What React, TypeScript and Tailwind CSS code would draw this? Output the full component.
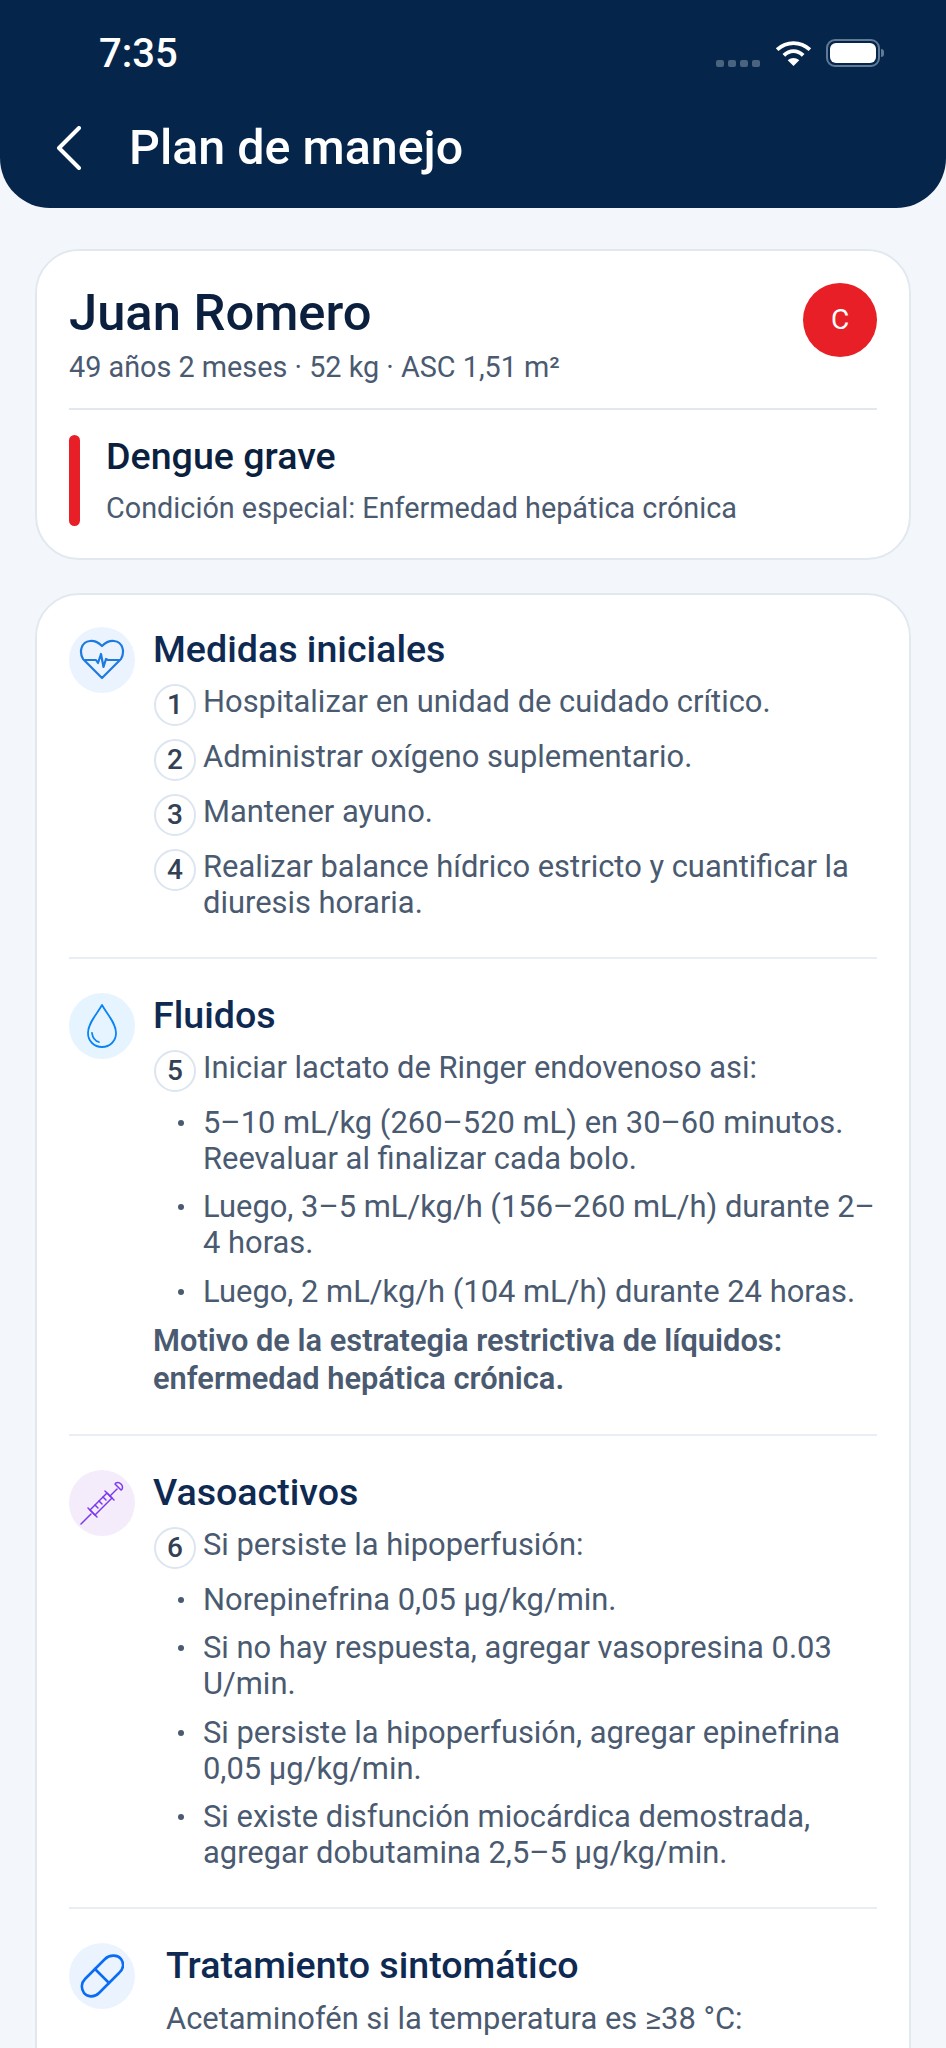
const font = { fontFamily: "Roboto, sans-serif" };

function NumberBadge({ n }: { n: number }) {
  return (
    <span className="flex h-[42px] w-[42px] shrink-0 items-center justify-center rounded-full border-2 border-[#dce5f0] text-[28px] font-medium leading-none text-[#334155]">
      {n}
    </span>
  );
}

function Step({ n, children }: { n: number; children: React.ReactNode }) {
  return (
    <div className="flex items-start gap-[7px]">
      <NumberBadge n={n} />
      <p className="text-[30.9px] leading-[36px] text-[#4a5a70]">{children}</p>
    </div>
  );
}

function Bullet({ children }: { children: React.ReactNode }) {
  return (
    <div className="flex items-start">
      <span className="flex h-[36px] w-[49px] shrink-0 items-center justify-end pr-[19px]">
        <span className="h-[6px] w-[6px] rounded-full bg-[#4a5a70]" />
      </span>
      <p className="text-[30.9px] leading-[36px] text-[#4a5a70]">{children}</p>
    </div>
  );
}

function IconCircle({ bg, children }: { bg: string; children: React.ReactNode }) {
  return (
    <div className={`flex h-[66px] w-[66px] shrink-0 items-center justify-center rounded-full ${bg}`}>
      {children}
    </div>
  );
}

function HeartIcon() {
  return (
    <svg width="46" height="42" viewBox="0 0 46 42" fill="none" stroke="#1d7ae0" strokeWidth="2.2" strokeLinecap="round" strokeLinejoin="round">
      <path d="M4 20 C0 13 2 3 11 2 C16 1.5 20 4 23 7 C26 4 30 1.5 35 2 C44 3 46 13 42 20" />
      <path d="M5 21 H17 L19 24 L22 15 L24.5 28 L27 20 L29 21 H41 L23 39 Z" />
    </svg>
  );
}

function DropIcon() {
  return (
    <svg width="32" height="46" viewBox="0 0 32 46" fill="none" stroke="#0a84f5" strokeWidth="1.8" strokeLinecap="round" strokeLinejoin="round">
      <path d="M16 2 C11 11 2 20 2 30 C2 38 8 44 16 44 C24 44 30 38 30 30 C30 20 21 11 16 2 Z" />
      <path d="M6 30 C6.5 34 9 38 13 39" />
    </svg>
  );
}

function SyringeIcon() {
  return (
    <svg width="44" height="44" viewBox="0 0 44 44" fill="none" stroke="#7c3aed" strokeWidth="1.5" strokeLinecap="round" strokeLinejoin="round">
      <path d="M1 43 L11 33" />
      <path d="M10 29 L15 34 L32 17 L27 12 L10 29 Z" />
      <path d="M8 27 L17 36" />
      <path d="M25 10 L34 19" />
      <path d="M30 15 L37 8" />
      <path d="M35 3 L41 9 C43 8 43 5 41 3 C39 1 36 1 35 3 Z" />
      <path d="M15 24 L18 27 M19 20 L22 23 M23 16 L26 19" />
    </svg>
  );
}

function PillIcon() {
  return (
    <svg width="44" height="44" viewBox="0 0 44 44" fill="none" stroke="#0a6cf5" strokeWidth="2.6" strokeLinecap="round" strokeLinejoin="round">
      <path d="M5 25 L25 5 C30 0 38 1 41 5 C44 9 44 15 39 19 L19 39 C14 44 7 43 4 39 C1 35 1 29 5 25 Z" />
      <path d="M15 15 L29 29" />
    </svg>
  );
}

function Section({
  icon,
  title,
  top,
  gap,
  children,
}: {
  icon: React.ReactNode;
  title: string;
  top: string;
  gap: string;
  children: React.ReactNode;
}) {
  return (
    <section className={`flex gap-[19px] border-b-2 border-[#e9eef5] pb-[36px] ${top}`}>
      {icon}
      <div className="min-w-0 flex-1 pt-[4px]">
        <h2 className="-ml-px text-[37.6px] font-medium leading-[36px] text-[#0f2a52]">{title}</h2>
        <div className={`mt-[17px] flex flex-col ${gap}`}>{children}</div>
      </div>
    </section>
  );
}

export default function App() {
  return (
    <div className="h-[2048px] w-[946px] overflow-hidden bg-[#f3f6fb]" style={font}>
      <header className="h-[208px] rounded-b-[50px] bg-[#05264a] text-white">
        <div className="flex h-[104px] items-start justify-between pl-[99px] pr-[66px] pt-[32px]">
          <span className="text-[40px] font-medium leading-[44px]">7:35</span>
          <div className="flex items-end pt-[7px]">
            <div className="mr-[15px] flex gap-[4px]">
              <span className="h-[7px] w-[8px] rounded-[2px] bg-[#4a6480]" />
              <span className="h-[7px] w-[8px] rounded-[2px] bg-[#4a6480]" />
              <span className="h-[7px] w-[8px] rounded-[2px] bg-[#4a6480]" />
              <span className="h-[7px] w-[8px] rounded-[2px] bg-[#4a6480]" />
            </div>
            <svg width="37" height="27" viewBox="0 0 38 28" fill="none" stroke="white" strokeWidth="4">
              <path d="M2 10 C12 1 26 1 36 10" />
              <path d="M9 16 C15 10 23 10 29 16" />
              <path d="M13 21 L19 27 L25 21 C21 18 17 18 13 21 Z" fill="white" stroke="none" />
            </svg>
            <div className="relative ml-[14px] flex h-[28px] w-[54px] items-center justify-center rounded-[9px] border-2 border-[#5f7a96]">
              <span className="h-[20px] w-[46px] rounded-[6px] bg-white" />
              <span className="absolute -right-[6px] h-[8px] w-[3px] rounded-r-full bg-[#5f7a96]" />
            </div>
          </div>
        </div>
        <div className="flex items-center pl-[56px] pt-[18px]">
          <svg width="26" height="44" viewBox="0 0 26 44" fill="none" stroke="white" strokeWidth="4" strokeLinecap="round" strokeLinejoin="round">
            <path d="M23 2 L3 22 L23 42" />
          </svg>
          <h1 className="ml-[47px] text-[48.4px] font-medium leading-[52px]">Plan de manejo</h1>
        </div>
      </header>

      <main className="flex flex-col gap-[33px] px-[35px] pt-[41px]">
        <div className="rounded-[44px] border-2 border-[#e2e8f0] bg-white px-[32px] pt-[34px] pb-[32px]">
          <div className="flex items-start justify-between border-b-2 border-[#e2e8f0] pb-[24px]">
            <div>
              <h2 className="text-[50.7px] font-medium leading-[56px] text-[#0b1f3f]">Juan Romero</h2>
              <p className="mt-[9px] text-[28.8px] leading-[34px] text-[#4a5a70]">49 años 2 meses · 52 kg · ASC 1,51 m²</p>
            </div>
            <span className="-mt-[2px] flex h-[74px] w-[74px] items-center justify-center rounded-full bg-[#e81f27] text-[28px] text-white">C</span>
          </div>
          <div className="mt-[25px] flex gap-[26px]">
            <div className="w-[11px] rounded-full bg-[#e81f27]" />
            <div className="-mt-[1px]">
              <h3 className="text-[37.6px] font-medium leading-[44px] text-[#0b1f3f]">Dengue grave</h3>
              <p className="mt-[12px] text-[28.8px] leading-[36px] text-[#4a5a70]">Condición especial: Enfermedad hepática crónica</p>
            </div>
          </div>
        </div>

        <div className="rounded-[44px] border-2 border-[#e2e8f0] bg-white px-[32px]">
          <Section icon={<IconCircle bg="bg-[#ebf4fe]"><HeartIcon /></IconCircle>} title="Medidas iniciales" top="pt-[32px]" gap="gap-[13px]">
            <Step n={1}>Hospitalizar en unidad de cuidado crítico.</Step>
            <Step n={2}>Administrar oxígeno suplementario.</Step>
            <Step n={3}>Mantener ayuno.</Step>
            <Step n={4}>Realizar balance hídrico estricto y cuantificar la diuresis horaria.</Step>
          </Section>
          <Section icon={<IconCircle bg="bg-[#e6f4ff]"><DropIcon /></IconCircle>} title="Fluidos" top="pt-[34px]" gap="gap-[12.5px]">
            <Step n={5}>Iniciar lactato de Ringer endovenoso asi:</Step>
            <Bullet>5–10 mL/kg (260–520 mL) en 30–60 minutos. Reevaluar al finalizar cada bolo.</Bullet>
            <Bullet>Luego, 3–5 mL/kg/h (156–260 mL/h) durante 2–4 horas.</Bullet>
            <Bullet>Luego, 2 mL/kg/h (104 mL/h) durante 24 horas.</Bullet>
            <p className="-ml-px text-[30.8px] font-semibold leading-[38px] text-[#4a5a70]">
              Motivo de la estrategia restrictiva de líquidos: enfermedad hepática crónica.
            </p>
          </Section>
          <Section icon={<IconCircle bg="bg-[#f5ecfb]"><SyringeIcon /></IconCircle>} title="Vasoactivos" top="pt-[34px]" gap="gap-[12.5px]">
            <Step n={6}>Si persiste la hipoperfusión:</Step>
            <Bullet>Norepinefrina 0,05 µg/kg/min.</Bullet>
            <Bullet>Si no hay respuesta, agregar vasopresina 0.03 U/min.</Bullet>
            <Bullet>Si persiste la hipoperfusión, agregar epinefrina 0,05 µg/kg/min.</Bullet>
            <Bullet>Si existe disfunción miocárdica demostrada, agregar dobutamina 2,5–5 µg/kg/min.</Bullet>
          </Section>
          <section className="flex gap-[31px] pt-[34px] pb-[60px]">
            <IconCircle bg="bg-[#ebf4fe]"><PillIcon /></IconCircle>
            <div className="min-w-0 flex-1 pt-px">
              <h2 className="text-[37.6px] font-medium leading-[42px] text-[#0f2a52]">Tratamiento sintomático</h2>
              <p className="mt-[15px] text-[30.9px] leading-[36px] text-[#4a5a70]">Acetaminofén si la temperatura es ≥38 °C:</p>
            </div>
          </section>
        </div>
      </main>
    </div>
  );
}
